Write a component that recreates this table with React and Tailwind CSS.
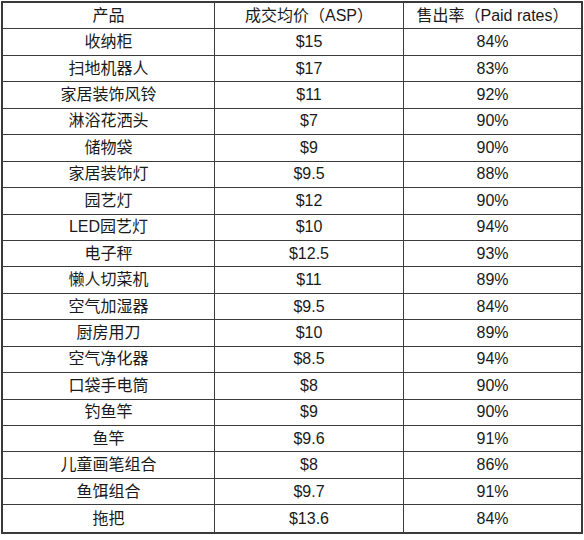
import React from 'react';

const rows = [
    ['收纳柜', '$15', '84%'],
    ['扫地机器人', '$17', '83%'],
    ['家居装饰风铃', '$11', '92%'],
    ['淋浴花洒头', '$7', '90%'],
    ['储物袋', '$9', '90%'],
    ['家居装饰灯', '$9.5', '88%'],
    ['园艺灯', '$12', '90%'],
    ['LED园艺灯', '$10', '94%'],
    ['电子秤', '$12.5', '93%'],
    ['懒人切菜机', '$11', '89%'],
    ['空气加湿器', '$9.5', '84%'],
    ['厨房用刀', '$10', '89%'],
    ['空气净化器', '$8.5', '94%'],
    ['口袋手电筒', '$8', '90%'],
    ['钓鱼竿', '$9', '90%'],
    ['鱼竿', '$9.6', '91%'],
    ['儿童画笔组合', '$8', '86%'],
    ['鱼饵组合', '$9.7', '91%'],
    ['拖把', '$13.6', '84%'],
];

const Row = ({ cells, last }) => (
    <div className={`flex h-[26.45px] ${last ? '' : 'border-b border-[#3c3c3c]'}`}>
        <div className="w-[212px] flex items-center justify-center border-r border-[#3c3c3c]">{cells[0]}</div>
        <div className="w-[189px] flex items-center justify-center border-r border-[#3c3c3c]">{cells[1]}</div>
        <div className="flex-1 flex items-center justify-center">{cells[2]}</div>
    </div>
);

const App = () => {
    return (
        <div className="w-[584px] h-[540px] bg-white pt-[1px] pl-[1px]">
            <div
                className="w-[582px] border-2 border-[#3a3a3a] text-[16px] text-[#1a1a1a] leading-none"
                style={{ fontFamily: '"Liberation Sans", "Noto Sans CJK SC", sans-serif' }}
            >
                <Row cells={['产品', '成交均价（ASP）', '售出率（Paid rates）']} />
                {rows.map((r, i) => (
                    <Row key={i} cells={r} last={i === rows.length - 1} />
                ))}
            </div>
        </div>
    );
};

export default App;
